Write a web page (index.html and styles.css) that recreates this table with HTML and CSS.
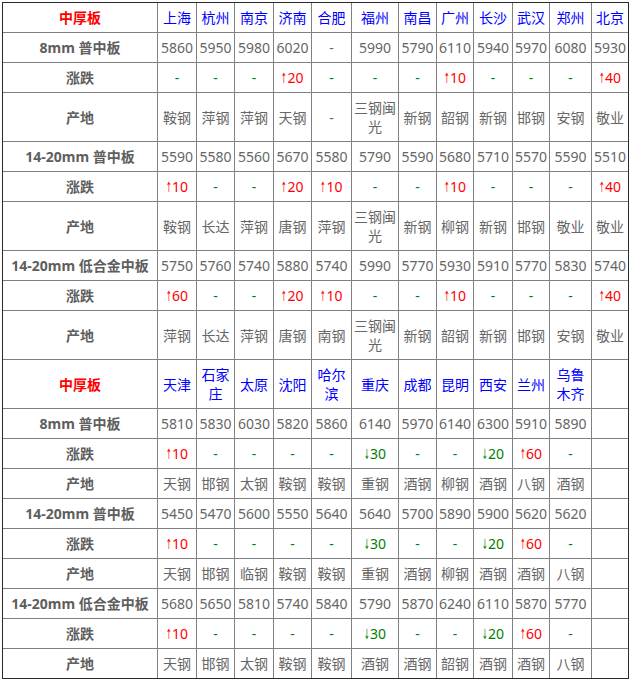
FILE: index.html
```html
<!DOCTYPE html>
<html lang="zh-CN">
<head>
<meta charset="utf-8">
<title>中厚板</title>
<link rel="stylesheet" href="styles.css">
</head>
<body>
<table class="t">
<colgroup>
<col class="w1"><col class="w2"><col class="w3"><col class="w4"><col class="w5"><col class="w6"><col class="w7"><col class="w8"><col class="w9"><col class="w10"><col class="w11"><col class="w12"><col class="w13">
</colgroup>
<tbody>
<tr><td class="hd">中厚板</td><td class="b">上海</td><td class="b">杭州</td><td class="b">南京</td><td class="b">济南</td><td class="b">合肥</td><td class="b">福州</td><td class="b">南昌</td><td class="b">广州</td><td class="b">长沙</td><td class="b">武汉</td><td class="b">郑州</td><td class="b">北京</td></tr>
<tr><td class="lb">8mm 普中板</td><td>5860</td><td>5950</td><td>5980</td><td>6020</td><td>-</td><td>5990</td><td>5790</td><td>6110</td><td>5940</td><td>5970</td><td>6080</td><td>5930</td></tr>
<tr><td class="lb">涨跌</td><td class="g">-</td><td class="g">-</td><td class="g">-</td><td class="r"><span class="ar">↑</span>20</td><td class="g">-</td><td class="g">-</td><td class="g">-</td><td class="r"><span class="ar">↑</span>10</td><td class="g">-</td><td class="g">-</td><td class="g">-</td><td class="r"><span class="ar">↑</span>40</td></tr>
<tr><td class="lb">产地</td><td>鞍钢</td><td>萍钢</td><td>萍钢</td><td>天钢</td><td>-</td><td>三钢闽光</td><td>新钢</td><td>韶钢</td><td>新钢</td><td>邯钢</td><td>安钢</td><td>敬业</td></tr>
<tr><td class="lb">14-20mm 普中板</td><td>5590</td><td>5580</td><td>5560</td><td>5670</td><td>5580</td><td>5790</td><td>5590</td><td>5680</td><td>5710</td><td>5570</td><td>5590</td><td>5510</td></tr>
<tr><td class="lb">涨跌</td><td class="r"><span class="ar">↑</span>10</td><td class="g">-</td><td class="g">-</td><td class="r"><span class="ar">↑</span>20</td><td class="r"><span class="ar">↑</span>10</td><td class="g">-</td><td class="g">-</td><td class="r"><span class="ar">↑</span>10</td><td class="g">-</td><td class="g">-</td><td class="g">-</td><td class="r"><span class="ar">↑</span>40</td></tr>
<tr><td class="lb">产地</td><td>鞍钢</td><td>长达</td><td>萍钢</td><td>唐钢</td><td>萍钢</td><td>三钢闽光</td><td>新钢</td><td>柳钢</td><td>新钢</td><td>邯钢</td><td>敬业</td><td>敬业</td></tr>
<tr><td class="lb">14-20mm 低合金中板</td><td>5750</td><td>5760</td><td>5740</td><td>5880</td><td>5740</td><td>5990</td><td>5770</td><td>5930</td><td>5910</td><td>5770</td><td>5830</td><td>5740</td></tr>
<tr><td class="lb">涨跌</td><td class="r"><span class="ar">↑</span>60</td><td class="g">-</td><td class="g">-</td><td class="r"><span class="ar">↑</span>20</td><td class="r"><span class="ar">↑</span>10</td><td class="g">-</td><td class="g">-</td><td class="r"><span class="ar">↑</span>10</td><td class="g">-</td><td class="g">-</td><td class="g">-</td><td class="r"><span class="ar">↑</span>40</td></tr>
<tr><td class="lb">产地</td><td>萍钢</td><td>长达</td><td>萍钢</td><td>唐钢</td><td>南钢</td><td>三钢闽光</td><td>新钢</td><td>韶钢</td><td>新钢</td><td>邯钢</td><td>安钢</td><td>敬业</td></tr>
<tr><td class="hd">中厚板</td><td class="b">天津</td><td class="b">石家庄</td><td class="b">太原</td><td class="b">沈阳</td><td class="b">哈尔滨</td><td class="b">重庆</td><td class="b">成都</td><td class="b">昆明</td><td class="b">西安</td><td class="b">兰州</td><td class="b">乌鲁木齐</td><td></td></tr>
<tr><td class="lb">8mm 普中板</td><td>5810</td><td>5830</td><td>6030</td><td>5820</td><td>5860</td><td>6140</td><td>5970</td><td>6140</td><td>6300</td><td>5910</td><td>5890</td><td></td></tr>
<tr><td class="lb">涨跌</td><td class="r"><span class="ar">↑</span>10</td><td class="g">-</td><td class="g">-</td><td class="g">-</td><td class="g">-</td><td class="g"><span class="ar">↓</span>30</td><td class="g">-</td><td class="g">-</td><td class="g"><span class="ar">↓</span>20</td><td class="r"><span class="ar">↑</span>60</td><td class="g">-</td><td></td></tr>
<tr><td class="lb">产地</td><td>天钢</td><td>邯钢</td><td>太钢</td><td>鞍钢</td><td>鞍钢</td><td>重钢</td><td>酒钢</td><td>柳钢</td><td>酒钢</td><td>八钢</td><td>酒钢</td><td></td></tr>
<tr><td class="lb">14-20mm 普中板</td><td>5450</td><td>5470</td><td>5600</td><td>5550</td><td>5640</td><td>5640</td><td>5700</td><td>5890</td><td>5900</td><td>5620</td><td>5620</td><td></td></tr>
<tr><td class="lb">涨跌</td><td class="r"><span class="ar">↑</span>10</td><td class="g">-</td><td class="g">-</td><td class="g">-</td><td class="g">-</td><td class="g"><span class="ar">↓</span>30</td><td class="g">-</td><td class="g">-</td><td class="g"><span class="ar">↓</span>20</td><td class="r"><span class="ar">↑</span>60</td><td class="g">-</td><td></td></tr>
<tr><td class="lb">产地</td><td>天钢</td><td>邯钢</td><td>临钢</td><td>鞍钢</td><td>鞍钢</td><td>重钢</td><td>酒钢</td><td>柳钢</td><td>酒钢</td><td>酒钢</td><td>八钢</td><td></td></tr>
<tr><td class="lb">14-20mm 低合金中板</td><td>5680</td><td>5650</td><td>5810</td><td>5740</td><td>5840</td><td>5790</td><td>5870</td><td>6240</td><td>6110</td><td>5870</td><td>5770</td><td></td></tr>
<tr><td class="lb">涨跌</td><td class="r"><span class="ar">↑</span>10</td><td class="g">-</td><td class="g">-</td><td class="g">-</td><td class="g">-</td><td class="g"><span class="ar">↓</span>30</td><td class="g">-</td><td class="g">-</td><td class="g"><span class="ar">↓</span>20</td><td class="r"><span class="ar">↑</span>60</td><td class="g">-</td><td></td></tr>
<tr><td class="lb">产地</td><td>天钢</td><td>邯钢</td><td>太钢</td><td>鞍钢</td><td>鞍钢</td><td>酒钢</td><td>酒钢</td><td>韶钢</td><td>酒钢</td><td>酒钢</td><td>八钢</td><td></td></tr>
</tbody>
</table>
</body>
</html>
```
FILE: styles.css
```css
body {
  margin: 0;
  background: #fff;
}
.t {
  margin: 2px 0 0 2px;
  border: 1px solid #2a2a2a;
  border-collapse: separate;
  border-spacing: 0;
  table-layout: fixed;
  width: 627px;
  font-family: "Noto Sans", "Noto Sans CJK SC", sans-serif;
  font-size: 14px;
  line-height: 19px;
  color: #666;
}
.t td {
  padding: 5px 0;
  text-align: center;
  vertical-align: middle;
  border-right: 1px solid #808080;
  border-bottom: 1px solid #808080;
}
.t td:last-child { border-right: 0; }
.t tr:last-child td { border-bottom: 0; }
.w1 { width: 155px; }
.w2 { width: 39px; }
.w3 { width: 38px; }
.w4 { width: 39px; }
.w5 { width: 38px; }
.w6 { width: 40px; }
.w7 { width: 47px; }
.w8 { width: 38px; }
.w9 { width: 37px; }
.w10 { width: 39px; }
.w11 { width: 37px; }
.w12 { width: 42px; }
.w13 { width: 36px; }
.hd { color: #f00; font-weight: bold; }
.lb { font-weight: bold; color: #5e5e5e; white-space: nowrap; }
.b { color: #00f; }
.r { color: #f00; }
.g { color: #008000; }
.ar {
  display: inline-block;
  width: 6px;
  line-height: 10px;
  font-family: "DejaVu Sans", sans-serif;
  transform: scaleX(0.5);
  transform-origin: 0 50%;
}
```
